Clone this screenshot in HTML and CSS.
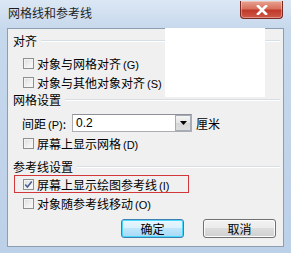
FILE: index.html
```html
<!DOCTYPE html>
<html lang="zh-CN">
<head>
<meta charset="utf-8">
<link rel="stylesheet" href="styles.css">
</head>
<body>
<div class="window">
  <div class="titlebar">
    <span class="title">网格线和参考线</span>
    <div class="close">
      <svg width="12" height="10" viewBox="0 0 12 10"><path d="M2 1 L10 9 M10 1 L2 9" stroke="#fff" stroke-width="2.6" stroke-linecap="square"/></svg>
    </div>
  </div>
  <div class="client">
    <div class="group-head h1"><span>对齐</span><i class="sep"></i></div>
    <label class="row r1"><span class="cb"></span><span class="lbl">对象与网格对齐<em>(G)</em></span></label>
    <label class="row r2"><span class="cb"></span><span class="lbl">对象与其他对象对齐<em>(S)</em></span></label>
    <div class="group-head h2"><span>网格设置</span><i class="sep"></i></div>
    <div class="row spacing">
      <span class="lbl">间距<em>(P)</em>:</span>
      <div class="combo"><span class="val">0.2</span><span class="drop"><svg width="7" height="4" viewBox="0 0 7 4"><path d="M0 0 H7 L3.5 4 Z" fill="#000"/></svg></span></div>
      <span class="unit">厘米</span>
    </div>
    <label class="row r3"><span class="cb"></span><span class="lbl">屏幕上显示网格<em>(D)</em></span></label>
    <div class="group-head h3"><span>参考线设置</span><i class="sep"></i></div>
    <label class="row hl"><span class="cb checked"><svg width="9" height="9" viewBox="0 0 9 9"><path d="M1.2 4.5 L3.4 7 L7.8 1.5" fill="none" stroke="#4b6190" stroke-width="1.6"/></svg></span><span class="lbl">屏幕上显示绘图参考线<em>(I)</em></span></label>
    <label class="row r4"><span class="cb"></span><span class="lbl">对象随参考线移动<em>(O)</em></span></label>
    <div class="buttons">
      <button class="btn default">确定</button>
      <button class="btn">取消</button>
    </div>
    <div class="patch"></div>
  </div>
</div>
</body>
</html>
```
FILE: styles.css
```css
html, body {
  margin: 0;
  padding: 0;
  width: 291px;
  height: 253px;
  overflow: hidden;
  background: #b9cde5;
}
.window {
  width: 291px;
  height: 253px;
  box-sizing: border-box;
  display: flex;
  flex-direction: column;
  background: linear-gradient(to bottom, #dbe7f4 0px, #c6d8ec 30px, #bcd0e8 100%);
  font-family: "Noto Sans CJK SC", "Liberation Sans", sans-serif;
  font-size: 12px;
  color: #000;
}
.titlebar {
  height: 28px;
  flex: none;
  display: flex;
  justify-content: space-between;
  align-items: flex-start;
  padding: 0 8px 0 8px;
  box-sizing: border-box;
}
.title {
  font-size: 12px;
  line-height: 26px;
  color: #1e1e1e;
}
.close {
  width: 43px;
  height: 18px;
  margin-top: 1px;
  box-sizing: border-box;
  border: 1px solid #7a2a22;
  border-top: none;
  border-radius: 0 0 4px 4px;
  background: linear-gradient(to bottom, #e8a493 0%, #d7705c 45%, #c0392b 55%, #cf5a48 100%);
  display: flex;
  align-items: center;
  justify-content: center;
  box-shadow: inset 0 0 0 1px rgba(255,255,255,0.35);
}
.client {
  position: relative;
  flex: 1;
  margin: 0 7px 6px 7px;
  border: 1px solid #8d9db3;
  background: #f0f0f0;
  padding: 2px 0 0 0;
  display: flex;
  flex-direction: column;
}
.group-head {
  display: flex;
  align-items: center;
  padding-left: 5px;
  padding-right: 3px;
  font-size: 12px;
  line-height: 14px;
}
.group-head span { flex: none; margin-right: 4px; }
.sep {
  flex: 1;
  height: 0;
  border-top: 1px solid #d5dfe5;
  border-bottom: 1px solid #ffffff;
}
.h1 { height: 20px; }
.h2 { height: 18px; }
.h3 { height: 16px; margin-top: 7px; }
.row {
  display: flex;
  align-items: center;
  height: 18px;
  padding-left: 15px;
  font-size: 12px;
}
.r1 { margin-top: 2px; height: 20px; }
.r2 { height: 18px; }
.r3 { margin-top: 2px; }
.r4 { margin-top: 1px; }
.lbl em {
  font-style: normal;
  font-family: "Liberation Sans", sans-serif;
  font-size: 11px;
  margin-left: 2px;
}
.cb {
  width: 11px;
  height: 11px;
  box-sizing: border-box;
  border: 1px solid #8e8f8f;
  background: linear-gradient(135deg, #dcdcdc 0%, #f4f4f4 70%, #fbfbfb 100%);
  box-shadow: inset 0 0 0 1px #f4f4f4;
  margin-right: 3px;
  flex: none;
  display: flex;
  align-items: center;
  justify-content: center;
}
.cb.checked svg { display: block; }
.hl {
  height: 18px;
  box-sizing: border-box;
  margin-left: 6px;
  width: 175px;
  border: 1px solid #d2383a;
  padding-left: 8px;
}
.spacing {
  padding-left: 14px;
  margin-top: 5px;
}
.combo {
  display: flex;
  margin-left: 6px;
  width: 120px;
  height: 18px;
  box-sizing: border-box;
  border: 1px solid #abadb3;
  border-top-color: #8e9298;
  background: #fff;
}
.val {
  flex: 1;
  font-family: "Liberation Sans", sans-serif;
  font-size: 12px;
  line-height: 16px;
  padding-left: 3px;
}
.drop {
  width: 16px;
  height: 16px;
  box-sizing: border-box;
  border: 1px solid #a5acb5;
  background: linear-gradient(to bottom, #f5f5f5 0%, #e5e5e5 50%, #d6d6d6 51%, #dedede 100%);
  display: flex;
  align-items: center;
  justify-content: center;
}
.unit { margin-left: 4px; }
.buttons {
  display: flex;
  gap: 19px;
  padding-left: 113px;
  margin-top: 7px;
}
.btn {
  height: 19px;
  box-sizing: border-box;
  border: 1px solid #707070;
  border-radius: 3px;
  background: linear-gradient(to bottom, #f2f2f2 0%, #ebebeb 49%, #dddddd 50%, #cfcfcf 100%);
  box-shadow: inset 0 0 0 1px #fcfcfc;
  font-family: "Noto Sans CJK SC", sans-serif;
  font-size: 12px;
  line-height: 15px;
  padding: 0;
  width: 73px;
  color: #000;
}
.btn.default {
  width: 63px;
  border-color: #3c7fb1;
  background: linear-gradient(to bottom, #eaf6fd 0%, #d9f0fc 49%, #bee6fd 50%, #a7d9f5 100%);
  box-shadow: inset 0 0 0 1px #48d8fb;
}
.patch {
  position: absolute;
  left: 157px;
  top: -1px;
  width: 100px;
  height: 69px;
  background: #ffffff;
}
```
